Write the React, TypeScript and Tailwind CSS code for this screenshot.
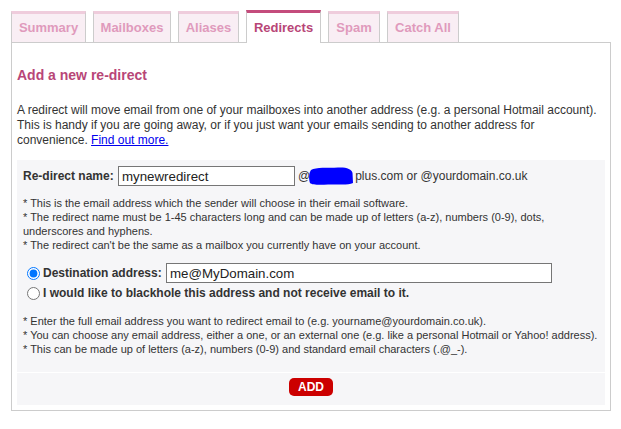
import React from "react";

const tabs: { t: string; w: string }[] = [
  { t: "Summary", w: "w-[75px]" },
  { t: "Mailboxes", w: "w-[78px]" },
  { t: "Aliases", w: "w-[61px]" },
  { t: "Redirects", w: "w-[75px]" },
  { t: "Spam", w: "w-[52px]" },
  { t: "Catch All", w: "w-[72px]" },
];

export default function App() {
  return (
    <div className="w-[621px] h-[429px] bg-white pl-[11px] pt-[10px] text-[#333]" style={{ fontFamily: '"Liberation Sans", Arial, sans-serif' }}>
      <div className="w-[600px]">
        <div className="flex gap-[7px] items-end relative z-10 -mb-px">
          {tabs.map(({ t, w }) => {
            const active = t === "Redirects";
            return (
              <div
                key={t}
                className={
                  (active
                    ? "h-[33px] bg-white border-x border-[#cccccc] border-t-[3px] border-t-[#c44c7c] text-[#b84677] "
                    : "h-[32px] bg-[#f9eef4] border-x border-b border-[#cccccc] border-t-[3px] border-t-[#efccdc] text-[#e09abc] ") +
                  w +
                  " flex items-center justify-center text-[13px] font-bold whitespace-nowrap"
                }
              >
                {t}
              </div>
            );
          })}
        </div>
        <div className="border border-[#cccccc] px-[5px] pt-[24px] pb-[5px]">
          <h2 className="text-[14px] font-bold text-[#b84677] leading-[16px]">Add a new re-direct</h2>
          <p className="mt-[20px] text-[12px] leading-[15px] text-[#333] whitespace-nowrap">
            A redirect will move email from one of your mailboxes into another address (e.g. a personal Hotmail account).
            <br />
            This is handy if you are going away, or if you just want your emails sending to another address for
            <br />
            convenience. <a href="#" className="text-[#0000ee] underline">Find out more.</a>
          </p>
          <div className="mt-[12px] bg-[#f6f6f8]">
            <div className="px-[6px] pt-[6px] pb-[16px]">
              <div className="flex items-center text-[12px]">
                <span className="font-bold text-[#333] w-[89px] whitespace-nowrap">Re-direct name:</span>
                <input
                  readOnly
                  value="mynewredirect"
                  className="ml-[6px] w-[177px] h-[20px] border border-[#767676] bg-white px-[3px] text-[13.3px] text-[#222] outline-none"
                />
                <span className="ml-[3px] relative flex items-center text-[12px] text-[#333]">
                  @
                  <svg width="46" height="20" viewBox="0 0 46 20" className="-ml-[2px]">
                    <path d="M3 4 C8 1 20 2 30 1.5 C38 1 44 3 44.5 7 L45 17 C40 19.5 30 18 20 18.5 C12 19 4 19 2 17 C0.5 12 1 7 3 4 Z" fill="#0000ff" />
                  </svg>
                  <span className="ml-[1px]">plus.com or @yourdomain.co.uk</span>
                </span>
              </div>
              <div className="mt-[10px] text-[11px] leading-[14px] text-[#333]">
                <div>* This is the email address which the sender will choose in their email software.</div>
                <div>* The redirect name must be 1-45 characters long and can be made up of letters (a-z), numbers (0-9), dots, underscores and hyphens.</div>
                <div>* The redirect can't be the same as a mailbox you currently have on your account.</div>
              </div>
              <div className="mt-[11px] pl-[3px]">
                <label className="flex items-center h-[20px] text-[12px]">
                  <input type="radio" name="dest" defaultChecked className="m-0 ml-[1px] w-[13px] h-[13px]" />
                  <span className="ml-[3px] font-bold text-[#333] w-[118px] whitespace-nowrap">Destination address:</span>
                  <input
                    readOnly
                    value="me@MyDomain.com"
                    className="ml-[5px] w-[386px] h-[20px] border border-[#767676] bg-white px-[3px] text-[13.3px] text-[#222] outline-none"
                  />
                </label>
                <label className="flex items-center h-[20px] text-[12px]">
                  <input type="radio" name="dest" className="m-0 ml-[1px] w-[13px] h-[13px]" />
                  <span className="ml-[3px] font-bold text-[#333]">I would like to blackhole this address and not receive email to it.</span>
                </label>
              </div>
              <div className="mt-[11px] text-[11px] leading-[14px] text-[#333] whitespace-nowrap">
                <div>* Enter the full email address you want to redirect email to (e.g. yourname@yourdomain.co.uk).</div>
                <div>* You can choose any email address, either a one, or an external one (e.g. like a personal Hotmail or Yahoo! address).</div>
                <div>* This can be made up of letters (a-z), numbers (0-9) and standard email characters (.@_-).</div>
              </div>
            </div>
            <div className="border-t border-white flex justify-center pt-[5px] pb-[9px]">
              <button className="h-[18px] px-[9px] rounded-[5px] bg-[#cc0000] text-white text-[12px] font-bold leading-none">ADD</button>
            </div>
          </div>
        </div>
      </div>
    </div>
  );
}
